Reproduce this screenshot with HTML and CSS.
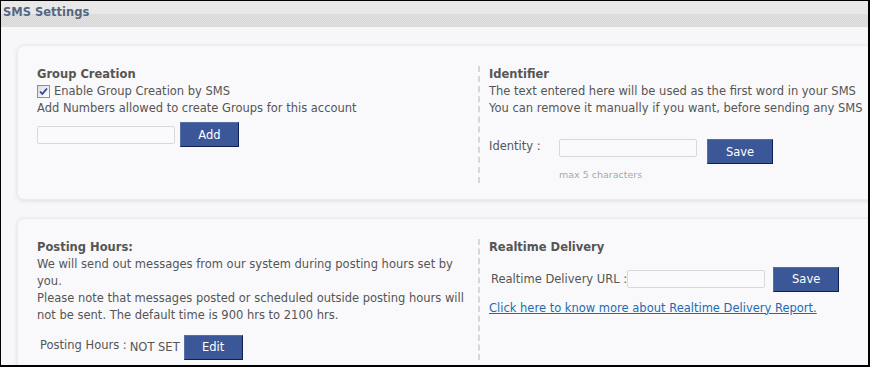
FILE: index.html
```html
<!DOCTYPE html>
<html lang="en">
<head>
    <meta charset="UTF-8">
    <meta name="viewport" content="width=device-width, initial-scale=1.0">
    <title>SMS Settings</title>
    <link rel="stylesheet" href="styles.css">
</head>
<body>
<div class="frame">
    <div class="page-head">SMS Settings</div>

    <div class="content">
        <div class="card">
            <div class="col left">
                <h4>Group Creation</h4>
                <label class="check-line">
                    <span class="fake-check">
                        <svg width="9" height="9" viewBox="0 0 9 9"><path d="M1 4.5 L3.3 7 L8 1.5" fill="none" stroke="#24449a" stroke-width="1.8"/></svg>
                    </span>
                    Enable Group Creation by SMS
                </label>
                <div>Add Numbers allowed to create Groups for this account</div>
                <div class="row row-add">
                    <input type="text" class="field">
                    <button class="btn">Add</button>
                </div>
            </div>
            <div class="col right">
                <h4>Identifier</h4>
                <div>The text entered here will be used as the first word in your SMS</div>
                <div>You can remove it manually if you want, before sending any SMS</div>
                <div class="row row-identity">
                    <span class="lbl lbl-identity">Identity :</span>
                    <div>
                        <input type="text" class="field">
                        <div class="hint">max 5 characters</div>
                    </div>
                    <button class="btn btn-save">Save</button>
                </div>
            </div>
        </div>

        <div class="card">
            <div class="col left">
                <h4>Posting Hours:</h4>
                <div>We will send out messages from our system during posting hours set by you.</div>
                <div>Please note that messages posted or scheduled outside posting hours will not be sent. The default time is 900 hrs to 2100 hrs.</div>
                <div class="row row-hours">
                    <span class="lbl lbl-hours">Posting Hours :</span>
                    <span class="not-set">NOT SET</span>
                    <button class="btn">Edit</button>
                </div>
            </div>
            <div class="col right">
                <h4>Realtime Delivery</h4>
                <div class="row row-url">
                    <span class="lbl lbl-url">Realtime Delivery URL :</span>
                    <input type="text" class="field">
                    <button class="btn btn-url">Save</button>
                </div>
                <a href="#" class="more-link">Click here to know more about Realtime Delivery Report.</a>
            </div>
        </div>
    </div>
</div>
</body>
</html>
```

FILE: styles.css
```css
html, body {
    margin: 0;
    padding: 0;
}

body {
    font-family: "DejaVu Sans", Verdana, sans-serif;
    font-size: 11.5px;
    color: #555;
    background: #f7f7fa;
}

.frame {
    width: 870px;
    height: 367px;
    box-sizing: border-box;
    border: 1px solid #000;
    border-right-width: 2px;
    border-bottom-width: 2px;
    overflow: hidden;
    background: #f7f7fa;
}

/* header bar with the dotted lower half */
.page-head {
    height: 26px;
    box-sizing: border-box;
    padding: 4px 0 0 2px;
    font-size: 11.5px;
    font-weight: bold;
    color: #56667f;
    border-bottom: 1px solid #dcdcdc;
    background: linear-gradient(#e8e8e8 0 13px, transparent 13px), repeating-conic-gradient(#d6d6d6 0 25%, #e2e2e2 0 50%) 0 0 / 2px 2px;
}

.content {
    padding: 19px 0 0 17px;
}

.card {
    display: grid;
    grid-template-columns: 441px 1fr;
    width: 880px;
    box-sizing: border-box;
    padding: 20px 0 16px 19px;
    margin-bottom: 20px;
    background: #f9f9fb;
    border-radius: 6px;
    box-shadow: 0 0 0 1px #ececef, 0 1px 4px 1px #dedee2;
}

.col {
    line-height: 17px;
}

.col.left {
    padding-right: 6px;
}

.col.right {
    border-left: 2px dashed #d6d6d6;
    padding-left: 9px;
}

h4 {
    margin: 0;
    font-size: 11.5px;
    font-weight: bold;
    color: #555;
}

.check-line {
    display: flex;
    align-items: center;
    gap: 4px;
}

.fake-check {
    width: 13px;
    height: 13px;
    box-sizing: border-box;
    border: 1px solid #8e8f8f;
    background: linear-gradient(135deg, #dcdcdc, #fff);
    display: flex;
    align-items: center;
    justify-content: center;
}

.row {
    display: flex;
}

.field {
    width: 138px;
    height: 18px;
    box-sizing: border-box;
    border: 1px solid #d8d8dc;
    border-radius: 2px;
    background: #fafafc;
    padding: 0 3px;
    margin: 0;
}

.btn {
    width: 59px;
    height: 25px;
    box-sizing: border-box;
    margin: 0;
    padding: 0;
    font-family: "DejaVu Sans", Verdana, sans-serif;
    font-size: 11.5px;
    color: #fff;
    background: #3b5797;
    border: 1px solid #5670a6;
    border-right-color: #0f1f55;
    border-bottom-color: #0f1f55;
    cursor: pointer;
}

.row-add {
    margin-top: 5px;
    align-items: center;
}

.row-add .field {
    margin-right: 5px;
}

.row-identity {
    margin-top: 22px;
    align-items: flex-start;
}

.lbl-identity {
    width: 70px;
    line-height: 14px;
}

.hint {
    margin-top: 8px;
    font-size: 9.5px;
    color: #a8a8a8;
}

.btn-save {
    margin-left: 10px;
    width: 66px;
}

.row-hours {
    margin-top: 11px;
    align-items: center;
}

.lbl-hours {
    margin-left: 3px;
    margin-right: 3px;
    position: relative;
    top: -2px;
}

.not-set {
    margin-right: 4px;
}

.row-url {
    margin-top: 11px;
    align-items: center;
}

.lbl-url {
    margin-left: 2px;
}

.btn-url {
    margin-left: 8px;
    width: 66px;
}

.more-link {
    display: block;
    margin-top: 8px;
    color: #1b6cb3;
}
```
